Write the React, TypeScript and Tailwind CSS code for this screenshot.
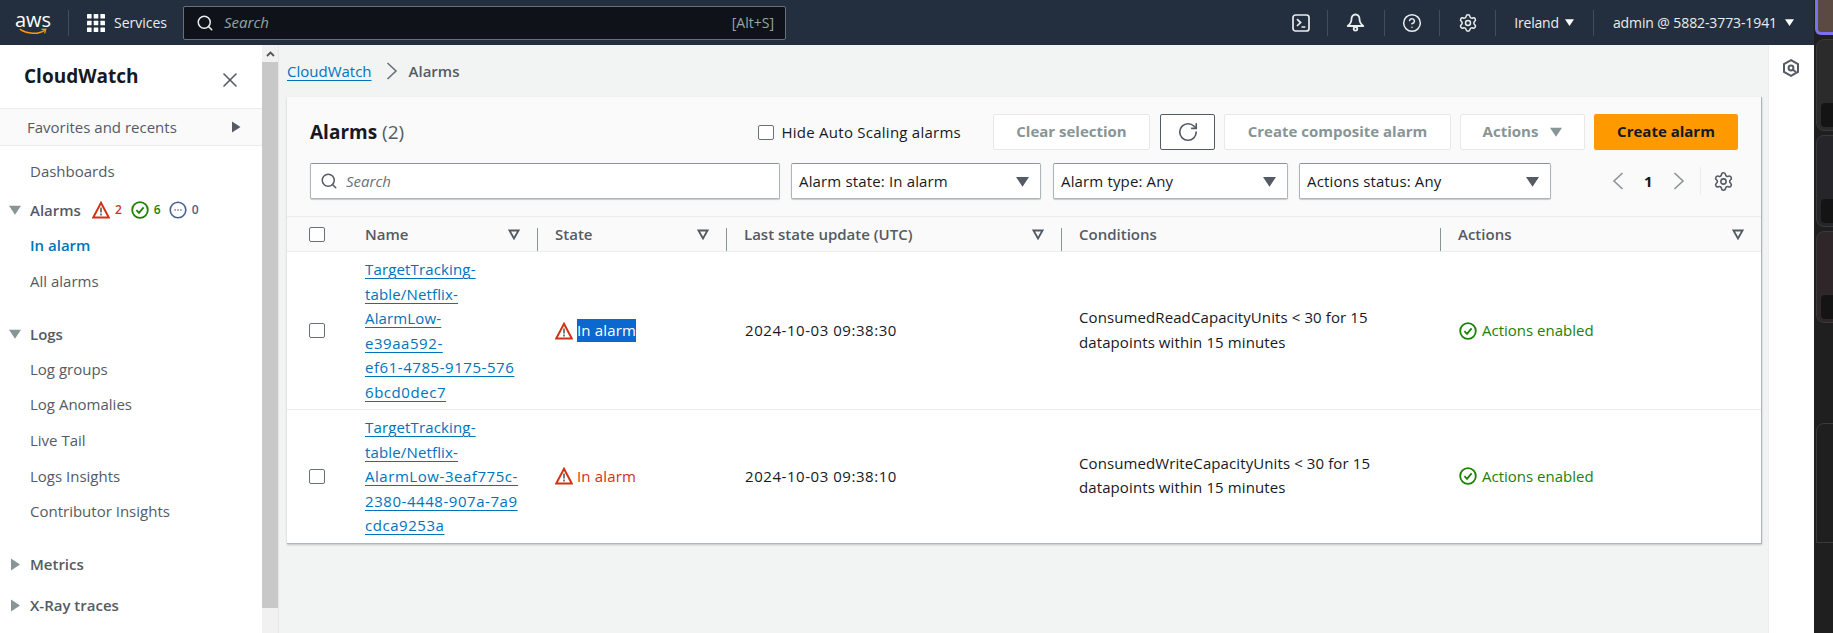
import { RotateCw, Search, Settings, X, CircleHelp } from 'lucide-react';

const FONT = "font-['Open_Sans','Noto_Sans',sans-serif]";

function Caret({ className = '', size = 10 }: { className?: string; size?: number }) {
  return (
    <svg width={size} height={size} viewBox="0 0 10 10" className={`shrink-0 ${className}`}>
      <polygon points="0,1.5 10,1.5 5,9" fill="currentColor" />
    </svg>
  );
}

function SortCaret() {
  return (
    <svg width="12" height="11" viewBox="0 0 12 11" className="shrink-0 text-[#545b64]">
      <polygon points="1.5,1.5 10.5,1.5 6,9.5" fill="none" stroke="currentColor" strokeWidth="1.8" />
    </svg>
  );
}

function Chevron({ dir, className = '' }: { dir: 'left' | 'right'; className?: string }) {
  return (
    <svg width="12" height="18" viewBox="0 0 12 18" fill="none" stroke="currentColor" strokeWidth="1.6" className={`shrink-0 ${className}`}>
      <path d={dir === 'left' ? 'M10.5 1 2 9l8.5 8' : 'M1.5 1 10 9l-8.5 8'} />
    </svg>
  );
}

function Warn({ size = 18 }: { size?: number }) {
  return (
    <svg width={size} height={size} viewBox="0 0 18 18" className="shrink-0 text-[#d13212]">
      <path d="M9 1.8 16.8 16.5H1.2Z" fill="none" stroke="currentColor" strokeWidth="2" strokeLinejoin="miter" />
      <path d="M9 6.5v5M9 12.6v2" stroke="#545b64" strokeWidth="1.6" />
    </svg>
  );
}

function Check({ size = 18 }: { size?: number }) {
  return (
    <svg width={size} height={size} viewBox="0 0 18 18" fill="none" className="shrink-0 text-[#1d8102]">
      <circle cx="9" cy="9" r="7.8" stroke="currentColor" strokeWidth="1.8" />
      <path d="M5.4 9.2 8 11.8l4.6-5.4" stroke="currentColor" strokeWidth="1.8" />
    </svg>
  );
}

function Dots() {
  return (
    <svg width="18" height="18" viewBox="0 0 18 18" fill="none" className="shrink-0 text-[#44628c]">
      <circle cx="9" cy="9" r="7.8" stroke="currentColor" strokeWidth="1.6" />
      <path d="M5.5 9h1.2M8.4 9h1.2M11.3 9h1.2" stroke="currentColor" strokeWidth="1.6" />
    </svg>
  );
}

function Checkbox() {
  return <span className="block h-[15px] w-4 shrink-0 rounded-[2px] border border-[#687078] bg-white" />;
}

function Divider() {
  return <span className="block h-[26px] w-px shrink-0 bg-[#414d5c]" />;
}

function NavItem({ label, className = '' }: { label: string; className?: string }) {
  return <div className={`flex h-9 items-center pl-[30px] text-[15px] text-[#545b64] ${className}`}>{label}</div>;
}

function NavGroup({ label, open, className = '' }: { label: string; open?: boolean; className?: string }) {
  return (
    <div className={`flex h-9 items-center text-[15px] font-semibold text-[#545b64] ${className}`}>
      <span className="flex w-[30px] justify-center text-[#879596]">
        {open ? (
          <Caret size={12} />
        ) : (
          <svg width="11" height="13" viewBox="0 0 11 13"><polygon points="1,0.5 10,6.5 1,12.5" fill="currentColor" /></svg>
        )}
      </span>
      {label}
    </div>
  );
}

function Sidebar() {
  return (
    <aside className="flex w-[262px] shrink-0 flex-col bg-white">
      <div className="flex h-[63px] shrink-0 items-center justify-between pl-6 pr-[20px]">
        <span className="text-[19px] font-bold text-[#16191f]">CloudWatch</span>
        <X size={24} strokeWidth={1.6} className="mt-1.5 text-[#545b64]" />
      </div>
      <div className="flex h-[38px] shrink-0 items-center justify-between border-y border-[#eaeded] bg-[#fafafa] pl-[27px] pr-[21px] text-[15px] text-[#545b64]">
        Favorites and recents
        <svg width="10" height="12" viewBox="0 0 10 12" className="text-[#545b64]"><polygon points="1,0.5 9.5,6 1,11.5" fill="currentColor" /></svg>
      </div>
      <NavItem label="Dashboards" className="mt-[7px]" />
      <div className="mt-[3px] flex h-9 items-center">
        <NavGroup label="Alarms" open />
        <span className="ml-[11px] flex items-center gap-[5px] text-xs font-semibold">
          <Warn />
          <span className="text-[#d13212]">2</span>
          <span className="ml-1"><Check /></span>
          <span className="text-[#1d8102]">6</span>
          <span className="ml-[3px]"><Dots /></span>
          <span className="text-[#44628c]">0</span>
        </span>
      </div>
      <NavItem label="In alarm" className="-mt-px font-semibold !text-[#0073bb]" />
      <NavItem label="All alarms" />
      <NavGroup label="Logs" open className="mt-[17px]" />
      <NavItem label="Log groups" className="-mt-px" />
      <NavItem label="Log Anomalies" className="-mt-px" />
      <NavItem label="Live Tail" />
      <NavItem label="Logs Insights" />
      <NavItem label="Contributor Insights" className="-mt-px" />
      <NavGroup label="Metrics" className="mt-[17px]" />
      <NavGroup label="X-Ray traces" className="mt-[5px]" />
    </aside>
  );
}

function SideScrollbar() {
  return (
    <div className="flex w-[17px] shrink-0 flex-col border-r border-[#e5e7e8] bg-[#f1f1f1]">
      <div className="flex h-[17px] items-center justify-center bg-[#f1f1f1]">
        <svg width="9" height="6" viewBox="0 0 9 6" fill="none"><path d="M1 5 4.5 1.5 8 5" stroke="#555" strokeWidth="1.8" /></svg>
      </div>
      <div className="h-[546px] bg-[#c8c8c8]" />
    </div>
  );
}

function Btn({ label, className = '' }: { label: string; className?: string }) {
  return (
    <div className={`flex h-9 items-center justify-center rounded-[2px] border border-[#e6e9e9] bg-white pb-px text-[15px] font-bold text-[#879596] ${className}`}>
      {label}
    </div>
  );
}

function Select({ label, className = '' }: { label: string; className?: string }) {
  return (
    <div className={`flex h-9 items-center justify-between rounded-[2px] border border-[#aab7b8] border-t-[#879596] bg-white pl-[7px] pr-[11px] text-[15px] tracking-[0.15px] text-[#16191f] shadow-[0_1px_1px_rgba(0,0,0,0.2)] ${className}`}>
      {label}
      <Caret size={13} className="text-[#545b64]" />
    </div>
  );
}

const COLS = 'grid grid-cols-[62px_188px_189px_335px_379px_1fr]';

function Th({ label, sort = true, divider = true }: { label: string; sort?: boolean; divider?: boolean }) {
  return (
    <div className={`relative flex items-center justify-between pr-[17px] ${divider ? 'pl-[18px]' : 'pl-[16px]'}`}>
      {divider && <span className="absolute left-0 top-[5px] h-[23px] w-px bg-[#879596]" />}
      <span>{label}</span>
      {sort && <SortCaret />}
    </div>
  );
}

function AlarmRow({ name, selected, time, conditions, border }: { name: string[]; selected?: boolean; time: string; conditions: string[]; border?: boolean }) {
  return (
    <div className={`${COLS} items-center py-[5px] text-[15px] text-[#16191f] ${border ? 'border-b border-[#eaeded]' : ''}`}>
      <div className="pl-[22px]"><Checkbox /></div>
      <div className="pl-[16px] leading-[24.5px] text-[#0073bb]">
        {name.map(l => (
          <div key={l}>
            <span className={`underline underline-offset-[3px] ${/\d/.test(l) ? 'tracking-[0.55px]' : 'tracking-[0.15px]'}`}>{l}</span>
          </div>
        ))}
      </div>
      <div className="flex items-center gap-1 pl-[18px] tracking-[0.15px] text-[#d13212]">
        <Warn />
        <span className={selected ? 'bg-[#0a68cf] text-white' : ''}>In alarm</span>
      </div>
      <div className="pl-[19px] tracking-[0.55px]">{time}</div>
      <div className="mb-[2px] pl-[18px] leading-[24.5px] tracking-[0.1px]">
        {conditions.map(l => <div key={l}>{l}</div>)}
      </div>
      <div className="flex items-center gap-[5px] pl-[19px] text-[#1d8102]">
        <Check />
        Actions enabled
      </div>
    </div>
  );
}

function AlarmsPanel() {
  return (
    <section className="ml-2 w-[1475px] border-r border-b border-[#aab7b8] bg-white shadow-[0_1px_2px_rgba(0,0,0,0.2)]">
      <div className="border-b border-[#eaeded] bg-[#fafafa] px-[23px] py-[17px]">
        <div className="flex items-center">
          <h1 className="text-[19px] font-bold text-[#16191f]">
            Alarms <span className="font-normal text-[#545b64]">(2)</span>
          </h1>
          <div className="ml-auto flex items-center gap-[8px] text-[15px] tracking-[0.25px] text-[#16191f]">
            <Checkbox />
            Hide Auto Scaling alarms
          </div>
          <Btn label="Clear selection" className="ml-8 w-[157px]" />
          <div className="ml-2.5 flex h-9 w-[55px] items-center justify-center rounded-[2px] border border-[#545b64] bg-white text-[#545b64]">
            <RotateCw size={22} strokeWidth={1.8} />
          </div>
          <Btn label="Create composite alarm" className="ml-[9px] w-[227px]" />
          <div className="ml-[9px] flex h-9 w-[125px] items-center justify-center gap-3 rounded-[2px] border border-[#e6e9e9] bg-white pb-px text-[15px] font-bold text-[#879596]">
            Actions <Caret size={12} />
          </div>
          <div className="ml-[9px] flex h-9 w-[144px] items-center justify-center rounded-[2px] bg-[#ff9900] pb-px text-[15px] font-bold text-[#16191f]">
            Create alarm
          </div>
        </div>
        <div className="mt-[13px] flex items-center">
          <div className="flex h-9 w-[470px] items-center gap-2 rounded-[2px] border border-[#aab7b8] border-t-[#879596] bg-white pl-[9px] text-[15px] italic text-[#687078] shadow-[0_1px_1px_rgba(0,0,0,0.2)]">
            <Search size={18} strokeWidth={2} className="text-[#545b64]" />
            Search
          </div>
          <Select label="Alarm state: In alarm" className="ml-[11px] w-[250px]" />
          <Select label="Alarm type: Any" className="ml-3 w-[235px]" />
          <Select label="Actions status: Any" className="ml-[11px] w-[252px]" />
          <div className="ml-[61px] flex items-center text-[#879596]">
            <Chevron dir="left" />
            <span className="mx-5 text-[15px] font-bold text-[#16191f]">1</span>
            <Chevron dir="right" />
            <span className="ml-[15px] h-7 w-px bg-[#eaeded]" />
            <Settings size={21} strokeWidth={1.8} className="ml-[12px] text-[#545b64]" />
          </div>
        </div>
      </div>
      <div className={`${COLS} h-[35px] items-center border-b border-[#eaeded] bg-[#fafafa] text-[15px] font-semibold text-[#545b64]`}>
        <div className="pl-[22px]"><Checkbox /></div>
        <Th label="Name" divider={false} />
        <Th label="State" />
        <Th label="Last state update (UTC)" />
        <Th label="Conditions" sort={false} />
        <Th label="Actions" />
      </div>
      <AlarmRow
        name={['TargetTracking-', 'table/Netflix-', 'AlarmLow-', 'e39aa592-', 'ef61-4785-9175-576', '6bcd0dec7']}
        selected
        time="2024-10-03 09:38:30"
        conditions={['ConsumedReadCapacityUnits < 30 for 15', 'datapoints within 15 minutes']}
        border
      />
      <AlarmRow
        name={['TargetTracking-', 'table/Netflix-', 'AlarmLow-3eaf775c-', '2380-4448-907a-7a9', 'cdca9253a']}
        time="2024-10-03 09:38:10"
        conditions={['ConsumedWriteCapacityUnits < 30 for 15', 'datapoints within 15 minutes']}
      />
    </section>
  );
}

function TopBar() {
  return (
    <header className="flex h-[45px] shrink-0 items-center bg-[#232f3e] text-[14px] text-[#eaeded]">
      <div className="relative ml-[14px] flex h-[24px] w-[38px] flex-col items-center text-white">
        <span className="text-[20px] leading-[18px]">aws</span>
        <svg width="36" height="9" viewBox="0 0 36 9" fill="none" className="-mt-px">
          <path d="M1 1.5C10 8 25 8.5 33 3" stroke="#ff9900" strokeWidth="2" />
          <path d="M29 1.8 34.5 1.5 33 7" stroke="#ff9900" strokeWidth="1.6" />
        </svg>
      </div>
      <span className="ml-[16px]"><Divider /></span>
      <svg width="18" height="18" viewBox="0 0 18 18" className="ml-[18px] shrink-0 text-white" fill="currentColor">
        <rect x="0" y="0" width="4.6" height="4.6" rx="0.6" /><rect x="6.7" y="0" width="4.6" height="4.6" rx="0.6" /><rect x="13.4" y="0" width="4.6" height="4.6" rx="0.6" />
        <rect x="0" y="6.7" width="4.6" height="4.6" rx="0.6" /><rect x="6.7" y="6.7" width="4.6" height="4.6" rx="0.6" /><rect x="13.4" y="6.7" width="4.6" height="4.6" rx="0.6" />
        <rect x="0" y="13.4" width="4.6" height="4.6" rx="0.6" /><rect x="6.7" y="13.4" width="4.6" height="4.6" rx="0.6" /><rect x="13.4" y="13.4" width="4.6" height="4.6" rx="0.6" />
      </svg>
      <span className="ml-[9px] w-[69px]">Services</span>
      <div className="flex h-[34px] w-[603px] items-center justify-between rounded-[2px] border border-[#687078] bg-[#0f1319] pl-[12px] pr-[11px] text-[15px] text-[#95a5a6]">
        <span className="flex items-center gap-[10px] italic">
          <Search size={18} strokeWidth={2} className="text-[#eaeded]" />
          Search
        </span>
        <span className="text-[14px]">[Alt+S]</span>
      </div>
      <div className="ml-auto flex items-center">
        <svg width="18" height="18" viewBox="0 0 18 18" fill="none" stroke="currentColor" strokeWidth="1.7" className="shrink-0">
          <rect x="1" y="1" width="16" height="16" rx="2.5" />
          <path d="M5 5.2 8.6 8.6 5 12M9.5 13h3.8" />
        </svg>
        <span className="ml-[17px]"><Divider /></span>
        <svg width="19" height="19" viewBox="0 0 19 19" fill="none" stroke="currentColor" strokeWidth="1.8" className="ml-[18px] shrink-0">
          <path d="M9.5 1.5c-2.6 0-4 2-4 4.5 0 3-1.2 5-3.8 7h15.6c-2.6-2-3.8-4-3.8-7 0-2.5-1.4-4.5-4-4.5Z" strokeLinejoin="round" />
          <circle cx="9.5" cy="15.8" r="1.8" />
        </svg>
        <span className="ml-[19px]"><Divider /></span>
        <CircleHelp size={20} strokeWidth={1.8} className="ml-[17px]" />
        <span className="ml-[17px]"><Divider /></span>
        <Settings size={20} strokeWidth={1.8} className="ml-[18px]" />
        <span className="ml-[17px]"><Divider /></span>
        <span className="ml-[18px] tracking-[-0.2px]">Ireland</span>
        <Caret size={9} className="ml-[6px] text-white" />
        <span className="ml-[19px]"><Divider /></span>
        <span className="ml-[19px] tracking-[-0.1px]">admin @ 5882-3773-1941</span>
        <Caret size={9} className="ml-[8px] mr-[20px] text-white" />
      </div>
    </header>
  );
}

function RightRail() {
  return (
    <div className="flex w-[46px] shrink-0 justify-center border-l border-[#eaeded] bg-white pt-[14px]">
      <svg width="18" height="18" viewBox="0 0 18 18" fill="none" stroke="#545b64" strokeWidth="2" className="mr-[2px]">
        <path d="M9 1.2 16 5v8l-7 3.8L2 13V5Z" />
        <circle cx="9" cy="9" r="2.4" />
        <path d="M10.5 10.5 14 13" />
      </svg>
    </div>
  );
}

function Thumb({ className }: { className: string }) {
  return (
    <div className={`relative ml-[1px] w-[30px] shrink-0 rounded-l-[8px] border border-[#3a3a3a] ${className}`}>
      <span className="absolute bottom-[3px] left-[4px] h-[24px] w-[30px] rounded-l-[4px] bg-[#141414]" />
    </div>
  );
}

function DarkStrip() {
  return (
    <div className="flex w-[19px] shrink-0 flex-col overflow-hidden bg-[#1f1f1f] pl-[1px]">
      <div className="h-[35px] w-[30px] shrink-0 rounded-bl-[6px] border-b-[3px] border-l-[3px] border-[#7c6ff0] bg-[#5b4a42]" />
      <Thumb className="mt-[4px] h-[92px] bg-[#2b2b2b]" />
      <Thumb className="mt-[4px] h-[92px] bg-[#26262a]" />
      <Thumb className="mt-[4px] h-[92px] bg-[#2e2628]" />
      <div className="ml-[1px] mt-[100px] h-[120px] w-[30px] shrink-0 rounded-tl-[8px] border border-[#3a3a3a] bg-[#1f1f1f]" />
    </div>
  );
}

export default function App() {
  return (
    <div className={`flex h-[633px] w-[1833px] overflow-hidden bg-[#f2f3f3] ${FONT}`}>
      <div className="flex min-w-0 flex-1 flex-col">
        <TopBar />
        <div className="flex min-h-0 flex-1">
          <Sidebar />
          <SideScrollbar />
          <main className="min-w-0 flex-1 bg-[#f2f3f3]">
            <nav className="ml-2 flex h-[52px] items-center text-[15px]">
              <span className="text-[#0073bb] underline underline-offset-[3px]">CloudWatch</span>
              <Chevron dir="right" className="ml-3.5 mr-[11px] text-[#687078]" />
              <span className="font-semibold text-[#545b64]">Alarms</span>
            </nav>
            <AlarmsPanel />
          </main>
          <RightRail />
        </div>
      </div>
      <DarkStrip />
    </div>
  );
}
